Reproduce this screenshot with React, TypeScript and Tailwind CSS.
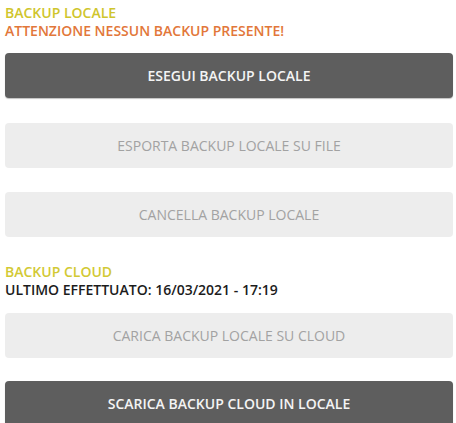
import React from 'react'

const font = { fontFamily: '"Open Sans", "Liberation Sans", sans-serif' }

function ActionButton({ label, enabled, className = '' }: { label: string; enabled?: boolean; className?: string }) {
  return (
    <button
      disabled={!enabled}
      className={
        'flex h-[45px] w-full items-center justify-center rounded-[4px] text-[14px] uppercase ' +
        (enabled
          ? 'bg-[#5e5e5e] font-semibold text-[#f4f4f4] shadow-[0_1px_1px_rgba(0,0,0,0.25)] '
          : 'bg-[#ededed] font-normal text-[#a2a2a2] ') +
        className
      }
    >
      {label}
    </button>
  )
}

export default function App() {
  return (
    <div className="h-[423px] w-[456px] overflow-hidden bg-white pl-[5px] pr-[3px] pt-[4px]" style={font}>
      <div className="text-[14px] font-semibold uppercase leading-[18px]">
        <div className="text-[#cfc52c]">Backup locale</div>
        <div className="text-[#e2773a]">Attenzione nessun backup presente!</div>
      </div>

      <ActionButton label="Esegui backup locale" enabled className="mt-[13px]" />
      <ActionButton label="Esporta backup locale su file" className="mt-[25px]" />
      <ActionButton label="Cancella backup locale" className="mt-[24px]" />

      <div className="mt-[26px] text-[14px] font-semibold uppercase leading-[18px]">
        <div className="text-[#d2c934]">Backup cloud</div>
        <div className="text-[#1c1c1c]">Ultimo effettuato: 16/03/2021 - 17:19</div>
      </div>

      <ActionButton label="Carica backup locale su cloud" className="mt-[14px]" />
      <ActionButton label="Scarica backup cloud in locale" enabled className="mt-[23px]" />
    </div>
  )
}
